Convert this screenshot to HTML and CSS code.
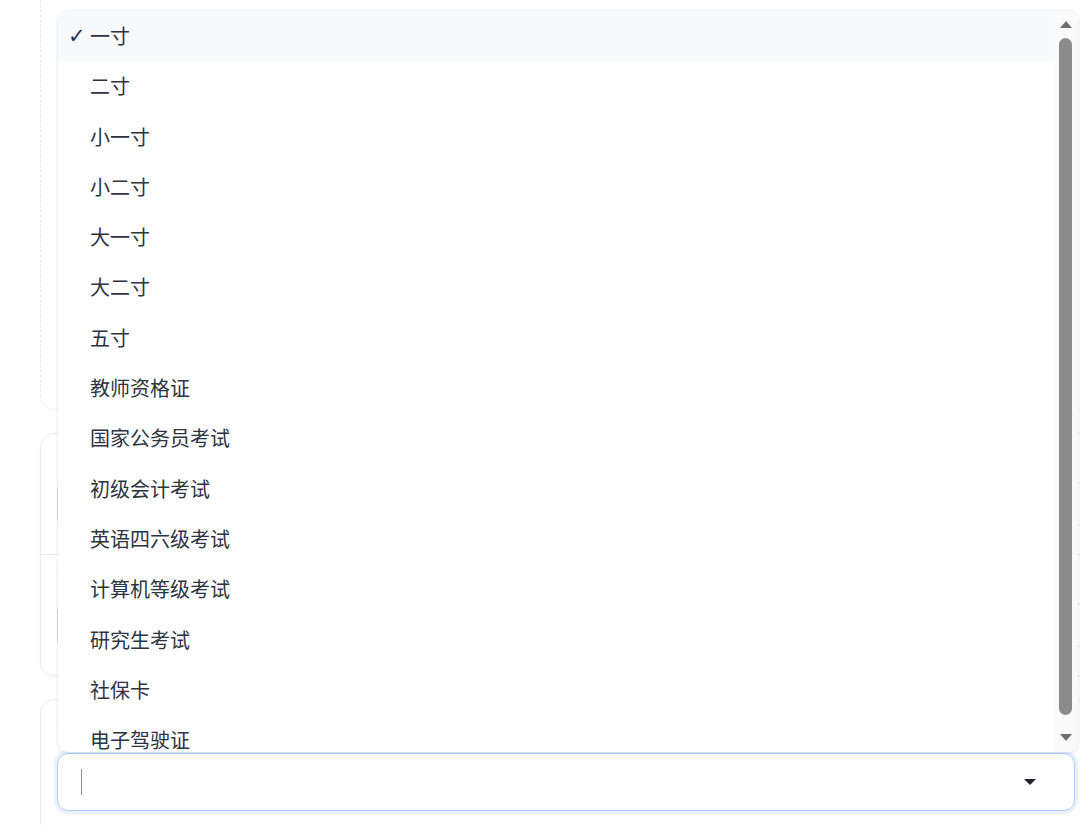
FILE: index.html
```html
<!DOCTYPE html>
<html lang="zh">
<head>
<meta charset="utf-8">
<link rel="stylesheet" href="styles.css">
</head>
<body>
<div class="page">
  <div class="card card-dashed"></div>
  <div class="card card-form">
    <div class="section">
      <div class="label"></div>
      <div class="field"></div>
    </div>
    <div class="section section-b">
      <div class="label"><span class="req">*</span></div>
      <div class="field"></div>
    </div>
  </div>
  <div class="card card-select">
    <div class="label"><span class="req">*</span></div>
    <div class="select focus">
      <span class="caret"></span>
      <svg class="arrow" width="12" height="7" viewBox="0 0 12 7"><path d="M0 0h12L6 6z" fill="#1f2430"/></svg>
    </div>
  </div>
</div>

<div class="popup">
  <ul class="list">
    <li class="item selected"><span class="check">✓</span>一寸</li>
    <li class="item">二寸</li>
    <li class="item">小一寸</li>
    <li class="item">小二寸</li>
    <li class="item">大一寸</li>
    <li class="item">大二寸</li>
    <li class="item">五寸</li>
    <li class="item">教师资格证</li>
    <li class="item">国家公务员考试</li>
    <li class="item">初级会计考试</li>
    <li class="item">英语四六级考试</li>
    <li class="item">计算机等级考试</li>
    <li class="item">研究生考试</li>
    <li class="item">社保卡</li>
    <li class="item">电子驾驶证</li>
  </ul>
  <div class="scrollbar">
    <svg class="sb-arrow up" width="12" height="8" viewBox="0 0 12 8"><path d="M0 8L6 1l6 7z" fill="#6f6f6f"/></svg>
    <div class="thumb"></div>
    <svg class="sb-arrow down" width="12" height="8" viewBox="0 0 12 8"><path d="M0 0h12L6 7z" fill="#6f6f6f"/></svg>
  </div>
</div>
</body>
</html>
```

FILE: styles.css
```css
html, body {
  margin: 0;
  padding: 0;
  background: #ffffff;
  overflow: hidden;
  width: 1080px;
  height: 825px;
  font-family: "Noto Sans CJK SC", "Noto Sans", sans-serif;
}

.page {
  padding-left: 40px;
  width: 1100px;
  display: flex;
  flex-direction: column;
  gap: 23px;
}

.card {
  box-sizing: border-box;
  width: 1060px;
  border-radius: 14px;
  background: #fff;
}

.card-dashed {
  margin-top: -40px;
  height: 450px;
  border: 1.5px dashed #e8e8e8;
}

.card-form {
  height: 243px;
  border: 1px solid #ececec;
  box-shadow: 0 2px 4px rgba(0,0,0,0.03);
  display: flex;
  flex-direction: column;
}

.section {
  flex: 1;
  padding: 16px;
  display: flex;
  flex-direction: column;
  gap: 14px;
}

.section-b {
  border-top: 1px solid #e8e8e8;
}

.label {
  height: 16px;
  font-size: 12px;
  line-height: 16px;
}

.req {
  color: #f0a070;
}

.field {
  height: 46px;
  border: 1px solid #dcdcdc;
  border-radius: 10px;
}

.card-select {
  height: 160px;
  border: 1px solid #ececec;
  padding: 16px 0 0 16px;
  display: flex;
  flex-direction: column;
  gap: 21px;
}

.select {
  box-sizing: border-box;
  width: 1018px;
  height: 58px;
  border: 1px solid #a9cdf7;
  border-radius: 11px;
  box-shadow: 0 0 0 3px #e9f2fe;
  display: flex;
  align-items: center;
  padding: 0 38px 0 23px;
}

.caret {
  width: 1px;
  height: 26px;
  background: #8a8a8a;
}

.arrow {
  margin-left: auto;
}

.popup {
  position: absolute;
  left: 58px;
  top: 11px;
  width: 1020px;
  height: 741px;
  background: #fff;
  border-radius: 9px;
  box-shadow: 0 1px 4px rgba(0,0,0,0.10), 0 0 1px rgba(0,0,0,0.12);
  display: flex;
  overflow: hidden;
}

.list {
  list-style: none;
  margin: 0;
  padding: 0;
  flex: 1;
}

.item {
  position: relative;
  height: 50.3px;
  line-height: 50px;
  padding-left: 32px;
  font-size: 20px;
  color: #2d3440;
  white-space: nowrap;
}

.item.selected {
  background: #f8f9fb;
}

.check {
  position: absolute;
  left: 10px;
  top: 0;
  font-family: "DejaVu Sans", sans-serif;
  font-size: 21px;
  color: #1e3050;
}

.scrollbar {
  width: 24px;
  background: #fafafa;
  display: flex;
  flex-direction: column;
  align-items: center;
  padding: 9px 0 10px;
  box-sizing: border-box;
}

.sb-arrow {
  flex: none;
}

.sb-arrow.up {
  margin-bottom: 10px;
}

.sb-arrow.down {
  margin-top: 19px;
}

.thumb {
  flex: 1;
  width: 13px;
  margin-left: -1px;
  border-radius: 7px;
  background: #8b8b8b;
}
```
